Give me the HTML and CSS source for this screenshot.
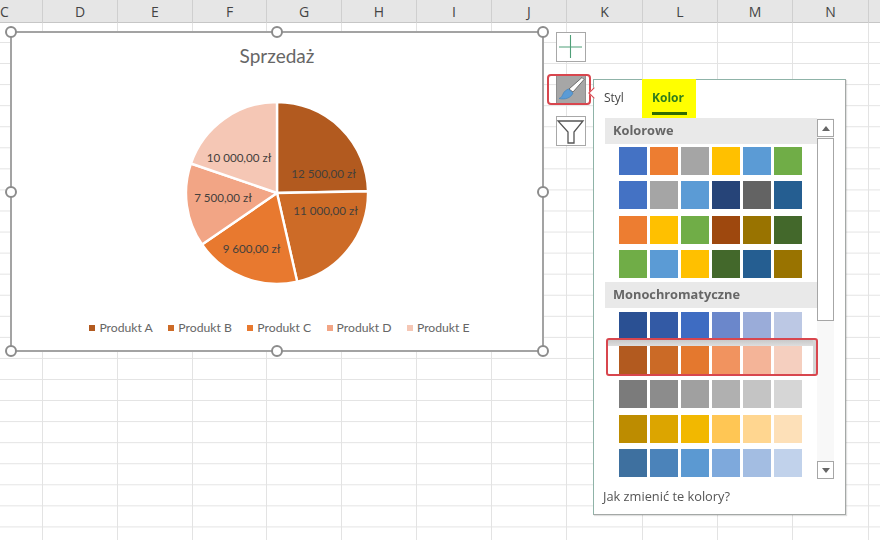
FILE: index.html
```html
<!DOCTYPE html>
<html lang="pl">
<head>
<meta charset="utf-8">
<title>Sprzedaż</title>
<link rel="stylesheet" href="styles.css">
</head>
<body>
<div class="app">
  <div class="col-heads">
    <div class="head">C</div><div class="head">D</div><div class="head">E</div><div class="head">F</div>
    <div class="head">G</div><div class="head">H</div><div class="head">I</div><div class="head">J</div>
    <div class="head">K</div><div class="head">L</div><div class="head">M</div><div class="head">N</div><div class="head"></div>
  </div>
  <div class="sheet">
    <div class="cell-col"></div><div class="cell-col"></div><div class="cell-col"></div><div class="cell-col"></div>
    <div class="cell-col"></div><div class="cell-col"></div><div class="cell-col"></div><div class="cell-col"></div>
    <div class="cell-col"></div><div class="cell-col"></div><div class="cell-col"></div><div class="cell-col"></div><div class="cell-col"></div>
  </div>

  <div class="chart">
    <span class="handle h-tl"></span><span class="handle h-tc"></span><span class="handle h-tr"></span>
    <span class="handle h-ml"></span><span class="handle h-mr"></span>
    <span class="handle h-bl"></span><span class="handle h-bc"></span><span class="handle h-br"></span>
    <div class="chart-title">Sprzedaż</div>
    <svg class="pie" viewBox="177 92 200 200" width="200" height="200">
      <g stroke="#fff" stroke-width="2.4" stroke-linejoin="round">
        <path fill="#b25a1f" d="M277 193V102A91 91 0 0 1 368 191.250Z"/>
        <path fill="#cd6b27" d="M277 193L368 191.250A91 91 0 0 1 297.200 281.700Z"/>
        <path fill="#e8792f" d="M277 193L297.200 281.700A91 91 0 0 1 202 244.500Z"/>
        <path fill="#f2a585" d="M277 193L202 244.500A91 91 0 0 1 190.900 163.500Z"/>
        <path fill="#f5c7b5" d="M277 193L190.900 163.500A91 91 0 0 1 277 102Z"/>
      </g>
      <g class="pie-labels" text-anchor="middle">
        <text x="323.5" y="178">12 500,00 zł</text>
        <text x="325.5" y="215">11 000,00 zł</text>
        <text x="251.5" y="253">9 600,00 zł</text>
        <text x="223" y="202">7 500,00 zł</text>
        <text x="239" y="162">10 000,00 zł</text>
      </g>
    </svg>
    <div class="legend">
      <div class="legend-item"><i class="key k1"></i>Produkt A</div>
      <div class="legend-item"><i class="key k2"></i>Produkt B</div>
      <div class="legend-item"><i class="key k3"></i>Produkt C</div>
      <div class="legend-item"><i class="key k4"></i>Produkt D</div>
      <div class="legend-item"><i class="key k5"></i>Produkt E</div>
    </div>
  </div>

  <div class="tools">
    <div class="tool">
      <svg viewBox="0 0 30 30" width="30" height="30"><path d="M3 15H26M14.500 3V26" stroke="#4f9f78" stroke-width="1.100" fill="none"/></svg>
    </div>
    <div class="tool tool-on">
      <svg viewBox="0 0 30 30" width="30" height="30">
        <path d="M26 3.500L28 5.500L17 18L13 15Z" fill="#fff" stroke="#555" stroke-width="0.800"/>
        <path d="M12.500 15L17 19C15 24 9 26 3 24.500C5.500 23.500 6 22 7 20C8 17.500 10 16 12.500 15Z" fill="#5b9bd5" stroke="#3d7fb8" stroke-width="0.600"/>
      </svg>
    </div>
    <div class="tool">
      <svg viewBox="0 0 30 30" width="30" height="30"><path d="M2 5H27L18 16V27H12V16Z" fill="#fff" stroke="#555" stroke-width="1.300" stroke-linejoin="miter"/></svg>
    </div>
    <div class="tool-mark"></div>
  </div>

  <div class="panel">
    <div class="tabs">
      <div class="tab">Styl</div>
      <div class="tab tab-on"><span class="tab-label">Kolor</span></div>
    </div>
    <div class="gallery">
      <div class="list">
        <div class="section">Kolorowe</div>
        <div class="swatches">
          <i class="c-4472c4"></i><i class="c-ed7d31"></i><i class="c-a5a5a5"></i><i class="c-ffc000"></i><i class="c-5b9bd5"></i><i class="c-70ad47"></i>
          <i class="c-4472c4"></i><i class="c-a5a5a5"></i><i class="c-5b9bd5"></i><i class="c-264478"></i><i class="c-636363"></i><i class="c-255e91"></i>
          <i class="c-ed7d31"></i><i class="c-ffc000"></i><i class="c-70ad47"></i><i class="c-9e480e"></i><i class="c-997300"></i><i class="c-43682b"></i>
          <i class="c-70ad47"></i><i class="c-5b9bd5"></i><i class="c-ffc000"></i><i class="c-43682b"></i><i class="c-255e91"></i><i class="c-997300"></i>
        </div>
        <div class="section section-next">Monochromatyczne</div>
        <div class="swatches swatches-mono">
          <i class="c-2a5093"></i><i class="c-335aa5"></i><i class="c-3e6cc2"></i><i class="c-6b87cb"></i><i class="c-9aacd9"></i><i class="c-bcc8e4"></i>
          <i class="c-b25a1f"></i><i class="c-cb6a26"></i><i class="c-e4782e"></i><i class="c-f1935f"></i><i class="c-f4b498"></i><i class="c-f5cfbf"></i>
          <i class="c-7b7b7b"></i><i class="c-8c8c8c"></i><i class="c-a0a0a0"></i><i class="c-b0b0b0"></i><i class="c-c4c4c4"></i><i class="c-d6d6d6"></i>
          <i class="c-bd8c00"></i><i class="c-dca500"></i><i class="c-f2b800"></i><i class="c-ffc654"></i><i class="c-ffd690"></i><i class="c-fde0b8"></i>
          <i class="c-3e709f"></i><i class="c-4b83ba"></i><i class="c-5b99d2"></i><i class="c-7ea9dc"></i><i class="c-a3bde2"></i><i class="c-c1d2eb"></i>
        </div>
      </div>
      <div class="scrollbar">
        <div class="arrow"><svg viewBox="0 0 10 6" width="8" height="5"><path d="M0 6L5 0L10 6Z" fill="#666"/></svg></div>
        <div class="thumb"></div>
        <div class="arrow arrow-down"><svg viewBox="0 0 10 6" width="8" height="5"><path d="M0 0L5 6L10 0Z" fill="#666"/></svg></div>
      </div>
    </div>
    <div class="footer">Jak zmienić te kolory?</div>
    <div class="selected"></div>
  </div>
</div>
</body>
</html>
```

FILE: styles.css
```css
* { box-sizing: border-box; }
html, body { margin: 0; padding: 0; background: #fff; }
.app {
  position: relative;
  width: 880px;
  height: 540px;
  overflow: hidden;
  font-family: "Open Sans", "Noto Sans", sans-serif;
  filter: blur(0.35px);
}

/* Worksheet */
.col-heads, .sheet {
  display: grid;
  grid-template-columns: 43px 75px 75px 74px 75px 75px 75px 75px 76px 75px 75px 76px 11px;
}
.col-heads {
  height: 23px;
  background: #e6e6e6;
  border-bottom: 1px solid #c6c6c6;
}
.head {
  border-right: 1px solid #cfcfcf;
  font-size: 14px;
  line-height: 23px;
  text-align: center;
  color: #444;
}
.head:first-child { text-align: left; }
.head:last-child { border-right: 0; }
.sheet {
  height: 517px;
  background: linear-gradient(#e3e3e3 1px, transparent 1px) 0 19px / 100% 21.07px;
}
.cell-col { border-right: 1px solid #e3e3e3; }
.cell-col:last-child { border-right: 0; }

/* Chart object */
.chart {
  position: absolute;
  left: 10px;
  top: 31px;
  width: 534px;
  height: 321px;
  background: #fff;
  border: 2px solid #a3a3a3;
  display: flex;
  flex-direction: column;
  align-items: center;
}
.handle {
  position: absolute;
  width: 12px;
  height: 12px;
  margin: -6px 0 0 -6px;
  background: #fff;
  border: 2px solid #8c8c8c;
  border-radius: 50%;
}
.h-tl { left: -1px; top: -1px; }
.h-tc { left: 50%; top: -1px; }
.h-tr { left: calc(100% + 1px); top: -1px; }
.h-ml { left: -1px; top: 50%; }
.h-mr { left: calc(100% + 1px); top: 50%; }
.h-bl { left: -1px; top: calc(100% + 1px); }
.h-bc { left: 50%; top: calc(100% + 1px); }
.h-br { left: calc(100% + 1px); top: calc(100% + 1px); }
.chart-title {
  margin-top: 11px;
  height: 24px;
  font-family: Lato, "Open Sans", sans-serif;
  font-size: 19px;
  line-height: 24px;
  color: #666;
}
.pie { display: block; margin-top: 24px; flex: none; }
.pie-labels text {
  font-family: Lato, "Open Sans", sans-serif;
  font-size: 11.600px;
  fill: #44403c;
}
.legend {
  display: flex;
  gap: 15.500px;
  margin-top: 28px;
  margin-left: 5px;
  font-family: Lato, "Open Sans", sans-serif;
  font-size: 12.200px;
  line-height: 16px;
  color: #666;
}
.legend-item { display: flex; align-items: center; gap: 4px; }
.key { width: 6px; height: 6px; display: block; }
.k1 { background: #b25a1f; }
.k2 { background: #cd6b27; }
.k3 { background: #e8792f; }
.k4 { background: #f2a585; }
.k5 { background: #f5c7b5; }

/* Chart tool buttons */
.tools {
  position: absolute;
  left: 556px;
  top: 32px;
  width: 30px;
  display: flex;
  flex-direction: column;
  gap: 12px;
}
.tool {
  width: 30px;
  height: 30px;
  background: #fff;
  border: 1px solid #a8a8a8;
  display: flex;
  align-items: center;
  justify-content: center;
  overflow: hidden;
}
.tool svg { flex: none; }
.tool-on { background: #a6a6a6; border-color: #8f8f8f; }
.tool-mark {
  position: absolute;
  left: -9px;
  top: 42px;
  width: 44px;
  height: 31px;
  border: 2px solid #d8464e;
  border-radius: 4px;
}

/* Colour flyout */
.panel {
  position: absolute;
  left: 593px;
  top: 79px;
  width: 253px;
  height: 436px;
  background: #fff;
  border: 1px solid #8fb3a8;
  border-right-color: #a4a8a6;
  border-bottom-color: #a4a8a6;
  box-shadow: 1px 1px 1px rgba(0, 0, 0, 0.12);
  padding-left: 11px;
}
.panel::before {
  content: "";
  position: absolute;
  left: -4px;
  top: 9px;
  width: 7px;
  height: 7px;
  background: #fff;
  border-left: 1px solid #d8464e;
  border-bottom: 1px solid #d8464e;
  transform: rotate(45deg);
}
.tabs {
  display: flex;
  height: 38px;
  font-size: 12px;
  color: #444;
}
.tab { width: 37px; line-height: 36px; margin-left: -1px; }
.tab-on {
  width: 54px;
  height: 39px;
  margin: -1px 0 0 1px;
  padding: 0 9px 0 10px;
  background: #ffff00;
  font-weight: 700;
  color: #2f7d1c;
}
.tab-label {
  display: block;
  height: 36px;
  line-height: 38px;
  border-bottom: 3px solid #2f6b00;
}
.gallery { display: flex; height: 361px; }
.list { width: 212px; height: 361px; overflow: hidden; }
.section {
  height: 26px;
  padding-left: 8px;
  background: #e9e9e9;
  font-size: 12.800px;
  font-weight: 700;
  line-height: 25px;
  color: #666;
}
.section-next { margin-top: 4px; }
.swatches {
  display: grid;
  grid-template-columns: repeat(6, 28px);
  grid-auto-rows: 28px;
  gap: 6.250px 3px;
  margin-top: 3px;
  padding-left: 14px;
}
.swatches-mono { margin-top: 4px; }
.swatches i { display: block; }
.scrollbar {
  width: 17px;
  height: 361px;
  padding-top: 1px;
  background: #f8f8f8;
  display: flex;
  flex-direction: column;
}
.arrow {
  height: 18px;
  background: #fff;
  border: 1px solid #a6a6a6;
  display: flex;
  align-items: center;
  justify-content: center;
}
.arrow svg { display: block; }
.thumb {
  height: 183px;
  margin-top: 1px;
  background: #fff;
  border: 1px solid #a6a6a6;
}
.arrow-down { margin-top: auto; }
.footer {
  margin-top: 8px;
  margin-left: -2px;
  font-size: 12.800px;
  line-height: 18px;
  color: #555;
}
.selected {
  position: absolute;
  left: 12px;
  top: 258px;
  width: 212px;
  height: 38px;
  border: 2px solid #d8464e;
  border-radius: 3px;
  background: linear-gradient(#c9c9c9, #dedede 6px, transparent 6px);
  box-shadow: inset -3px 0 0 #d4d4d4;
}

/* Swatch colours */
.c-4472c4 { background: #4472c4; } .c-ed7d31 { background: #ed7d31; } .c-a5a5a5 { background: #a5a5a5; }
.c-ffc000 { background: #ffc000; } .c-5b9bd5 { background: #5b9bd5; } .c-70ad47 { background: #70ad47; }
.c-264478 { background: #264478; } .c-636363 { background: #636363; } .c-255e91 { background: #255e91; }
.c-9e480e { background: #9e480e; } .c-997300 { background: #997300; } .c-43682b { background: #43682b; }
.c-2a5093 { background: #2a5093; } .c-335aa5 { background: #335aa5; } .c-3e6cc2 { background: #3e6cc2; }
.c-6b87cb { background: #6b87cb; } .c-9aacd9 { background: #9aacd9; } .c-bcc8e4 { background: #bcc8e4; }
.c-b25a1f { background: #b25a1f; } .c-cb6a26 { background: #cb6a26; } .c-e4782e { background: #e4782e; }
.c-f1935f { background: #f1935f; } .c-f4b498 { background: #f4b498; } .c-f5cfbf { background: #f5cfbf; }
.c-7b7b7b { background: #7b7b7b; } .c-8c8c8c { background: #8c8c8c; } .c-a0a0a0 { background: #a0a0a0; }
.c-b0b0b0 { background: #b0b0b0; } .c-c4c4c4 { background: #c4c4c4; } .c-d6d6d6 { background: #d6d6d6; }
.c-bd8c00 { background: #bd8c00; } .c-dca500 { background: #dca500; } .c-f2b800 { background: #f2b800; }
.c-ffc654 { background: #ffc654; } .c-ffd690 { background: #ffd690; } .c-fde0b8 { background: #fde0b8; }
.c-3e709f { background: #3e709f; } .c-4b83ba { background: #4b83ba; } .c-5b99d2 { background: #5b99d2; }
.c-7ea9dc { background: #7ea9dc; } .c-a3bde2 { background: #a3bde2; } .c-c1d2eb { background: #c1d2eb; }
```
